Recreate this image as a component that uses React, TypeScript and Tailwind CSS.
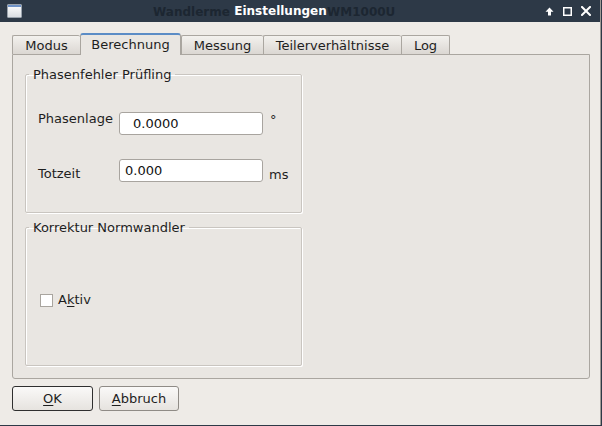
import React from 'react'

const tabs = [
  { label: 'Modus', w: 'w-[68px]' },
  { label: 'Berechnung', w: 'w-[101px]', active: true },
  { label: 'Messung', w: 'w-[82px]' },
  { label: 'Teilerverhältnisse', w: 'w-[138px]' },
  { label: 'Log', w: 'w-[49px]', last: true },
]

function WindowIcon() {
  return (
    <div className="ml-[7px] flex h-[14px] w-[15px] flex-col overflow-hidden rounded-[1px] border border-[#9aa3ad] bg-gradient-to-b from-[#ffffff] to-[#d9dde2]">
      <div className="h-[2px] w-full bg-[#6f93c8]" />
    </div>
  )
}

function TitleButtons() {
  return (
    <div className="flex items-center gap-[9px] pr-[9px]">
      <svg width="9" height="9" viewBox="0 0 9 9">
        <path d="M4.5 0.5 L8.5 4.8 L6 4.8 L6 8.5 L3 8.5 L3 4.8 L0.5 4.8 Z" fill="#ffffff" />
      </svg>
      <svg width="9" height="9" viewBox="0 0 9 9">
        <rect x="0.75" y="0.75" width="7.5" height="7.5" fill="none" stroke="#ffffff" strokeWidth="1.5" />
      </svg>
      <svg width="10" height="10" viewBox="0 0 10 10">
        <path d="M1 1 L9 9 M9 1 L1 9" stroke="#ffffff" strokeWidth="2" strokeLinecap="square" />
      </svg>
    </div>
  )
}

function GroupBox({ title, children }: { title: string; children?: React.ReactNode }) {
  return (
    <fieldset className="h-[146px] w-[277px] rounded-[2px] border border-[#c9c5c0] pl-[12px] shadow-[inset_1px_1px_0_#ffffff,1px_1px_0_#ffffff]">
      <legend className="ml-[-9px] px-[4px] leading-[15px] text-[#1e1e1e]">{title}</legend>
      {children}
    </fieldset>
  )
}

function TextField({ value, indent }: { value: string; indent: string }) {
  return (
    <div
      className={`flex h-[23px] w-[144px] items-center rounded-[3px] border border-[#a8a49f] bg-white ${indent} leading-[15px] text-[#111]`}
    >
      {value}
    </div>
  )
}

export default function App() {
  return (
    <div className="h-[426px] w-[602px] overflow-hidden bg-[#2d3947] font-['DejaVu_Sans',sans-serif] text-[13px] text-[#1e1e1e]">
      <div className="flex h-[425px] w-[601px] flex-col border-r border-[#9f9b96] bg-[#eeebe7]">
        {/* title bar; the faded words belong to the main window behind the dialog */}
        <div className="relative flex h-[22px] shrink-0 items-center bg-[#2d3947] text-[12px] font-bold">
          <WindowIcon />
          <div className="pointer-events-none absolute left-[153px] top-[5px] leading-[15px] text-[#1c2631]">Wandlerme</div>
          <div className="pointer-events-none absolute left-[327px] top-[5px] leading-[15px] text-[#1c2631]">WM1000U</div>
          <div className="flex-1 pr-[6px] pt-[1px] text-center leading-[15px] text-white">Einstellungen</div>
          <TitleButtons />
        </div>

        {/* body */}
        <div className="flex flex-1 flex-col pl-[12px] pr-[11px] pt-[11px]">
          <div className="flex h-[21px] items-end">
            {tabs.map((t) =>
              t.active ? (
                <div
                  key={t.label}
                  className={`relative z-10 -mb-px flex h-[22px] ${t.w} items-center justify-center rounded-t-[3px] border-x border-t-2 border-x-[#a9a59f] border-t-[#5b8cc6] bg-[#e9e6e2] pb-[2px] leading-[15px]`}
                >
                  {t.label}
                </div>
              ) : (
                <div
                  key={t.label}
                  className={`flex h-[19px] ${t.w} items-center justify-center rounded-t-[2px] border-l border-t ${t.last ? 'border-r' : ''} border-[#aaa6a0] bg-gradient-to-b from-[#f3f1ee] to-[#dbd7d2] leading-[15px]`}
                >
                  {t.label}
                </div>
              ),
            )}
          </div>

          <div className="flex h-[325px] w-[578px] flex-col rounded-b-[3px] border border-[#aaa6a0] bg-[#e9e6e2] pl-[12px] pt-[12px]">
            <GroupBox title="Phasenfehler Prüfling">
              <div className="mt-[29px] flex h-[23px] items-start">
                <div className="w-[81px] leading-[15px]">Phasenlage</div>
                <div className="mt-[1px]">
                  <TextField value="0.0000" indent="pl-[13px]" />
                </div>
                <div className="ml-[7px] mt-[1px] leading-[15px]">°</div>
              </div>
              <div className="mt-[25px] flex h-[23px] items-start">
                <div className="mt-[7px] w-[81px] leading-[15px]">Totzeit</div>
                <TextField value="0.000" indent="pl-[5px]" />
                <div className="ml-[6px] mt-[8px] leading-[15px]">ms</div>
              </div>
            </GroupBox>

            <div className="mt-[7px]">
              <GroupBox title="Korrektur Normwandler">
                <div className="ml-[2px] mt-[57px] flex items-start">
                  <div className="mt-[2px] h-[13px] w-[13px] border border-[#a9a59f] bg-white" />
                  <div className="ml-[5px] leading-[15px]">
                    A<span className="underline decoration-1 underline-offset-[2px]">k</span>tiv
                  </div>
                </div>
              </GroupBox>
            </div>
          </div>

          <div className="mt-[7px] flex gap-[6px]">
            <button className="flex h-[25px] w-[81px] items-center justify-center rounded-[3px] border border-[#2f2f2f] bg-gradient-to-b from-[#faf9f8] to-[#e6e3df] leading-[15px]">
              <span className="underline decoration-1 underline-offset-[2px]">O</span>K
            </button>
            <button className="flex h-[25px] w-[80px] items-center justify-center rounded-[3px] border border-[#8f8b86] bg-gradient-to-b from-[#faf9f8] to-[#e6e3df] leading-[15px]">
              <span className="underline decoration-1 underline-offset-[2px]">A</span>bbruch
            </button>
          </div>
        </div>
      </div>
    </div>
  )
}
